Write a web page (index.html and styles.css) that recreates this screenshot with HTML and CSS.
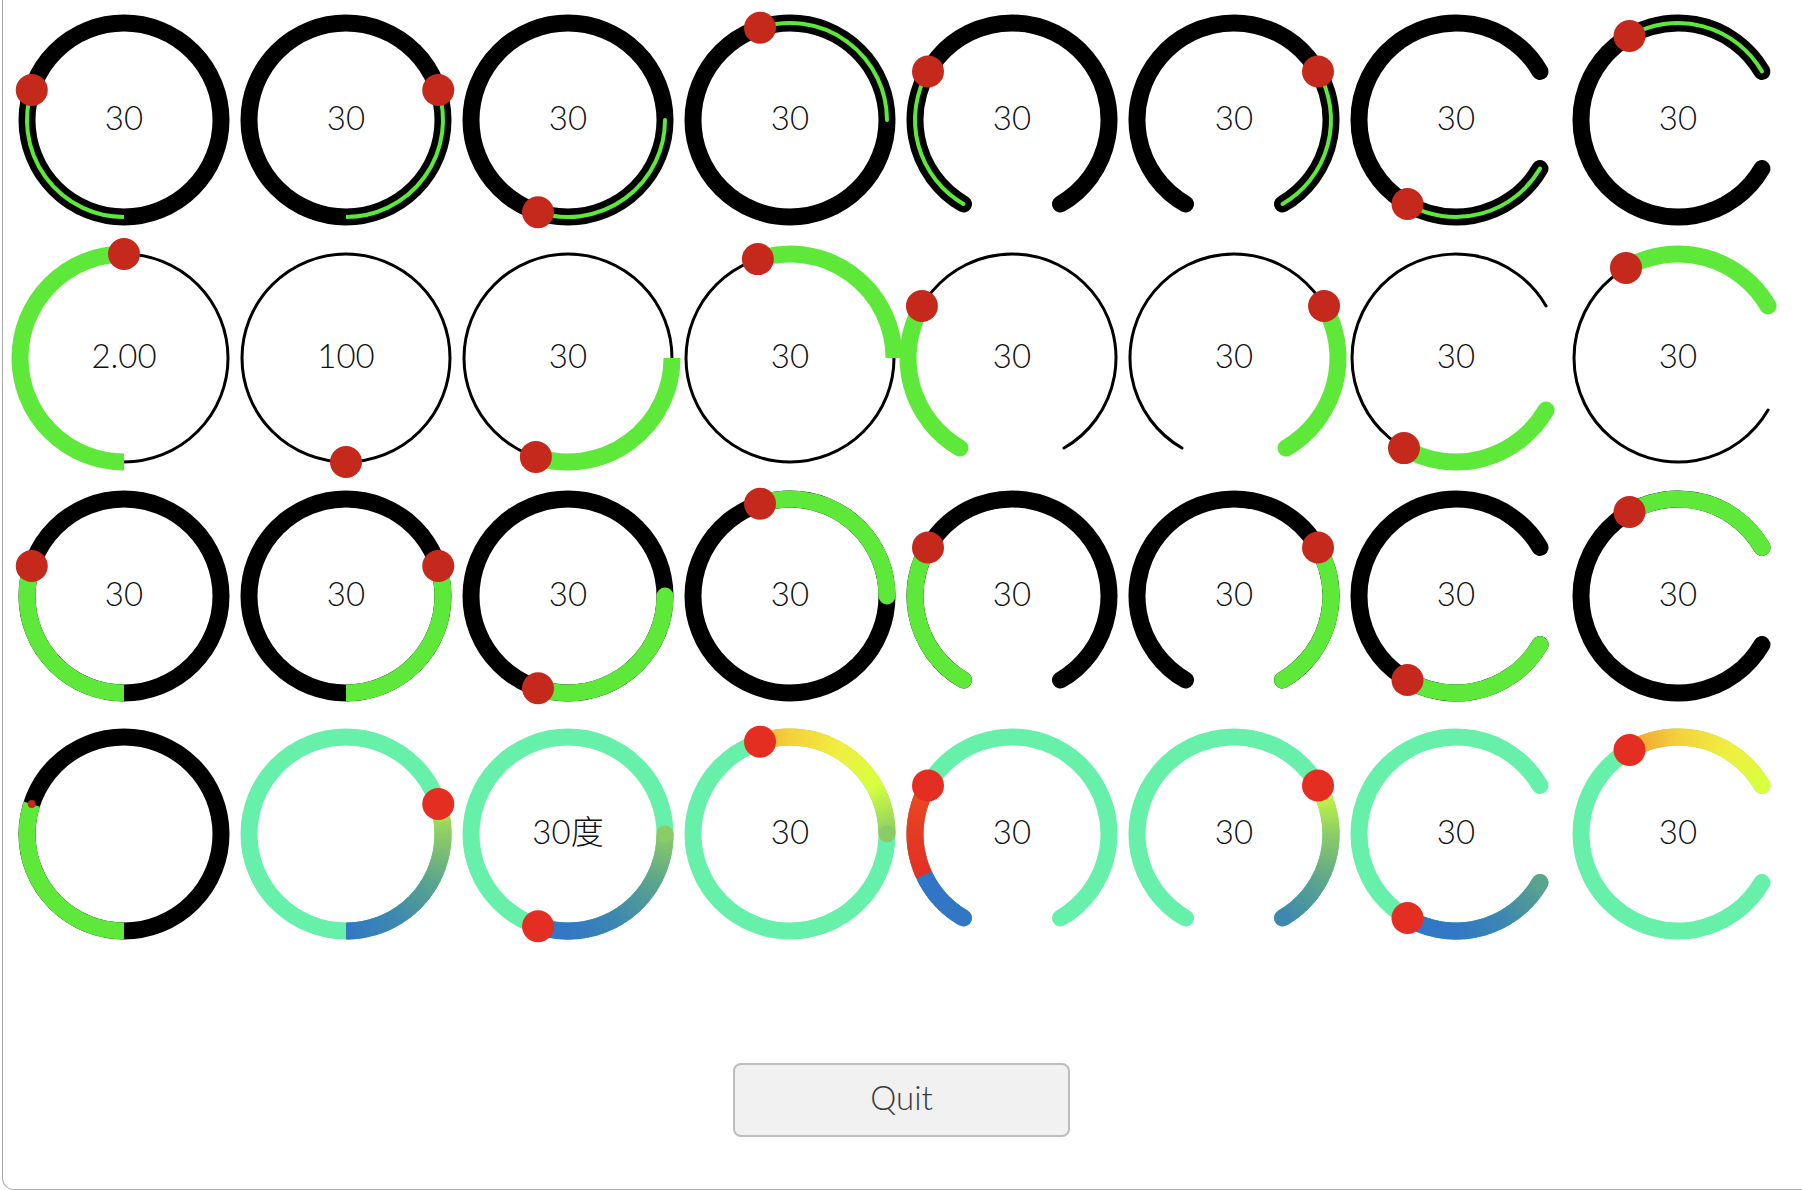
FILE: index.html
```html
<!DOCTYPE html>
<html lang="en">
<head>
<meta charset="utf-8">
<title>Dials</title>
<link rel="stylesheet" href="styles.css">
</head>
<body>
<div class="window">
  <div class="dials" id="dials"></div>
  <div class="actions"><button class="quit" type="button">Quit</button></div>
</div>
<script src="script.js"></script>
</body>
</html>
```

FILE: styles.css
```css
html, body {
  margin: 0;
  padding: 0;
  background: #ffffff;
}
body {
  width: 1802px;
  height: 1190px;
  overflow: hidden;
  font-family: Lato, "Noto Sans CJK SC", sans-serif;
}
.window {
  box-sizing: border-box;
  height: 1190px;
  margin-left: 2px;
  border-left: 1px solid #a9a9a9;
  border-bottom: 1px solid #b5b5b5;
  border-bottom-left-radius: 12px;
}
.dials {
  display: grid;
  grid-template-columns: repeat(8, 222px);
  grid-auto-rows: 238px;
  padding: 1px 0 0 10px;
}
.dial {
  position: relative;
  display: flex;
  align-items: center;
  justify-content: center;
}
.dial svg {
  position: absolute;
  left: 0;
  top: 0;
  overflow: visible;
}
.label {
  position: relative;
  font-family: Lato, "Noto Sans CJK SC", sans-serif;
  font-size: 33px;
  font-weight: 300;
  color: #111111;
  line-height: 1.2;
  padding-bottom: 5px;
}
.actions {
  display: flex;
  justify-content: center;
  margin-top: 110px;
  padding-right: 2px;
}
.quit {
  box-sizing: border-box;
  width: 337px;
  height: 74px;
  background: #f1f1f1;
  border: 2px solid #bdbdbd;
  border-radius: 8px;
  font-family: Lato, sans-serif;
  font-weight: 300;
  font-size: 33px;
  color: #3a3a3a;
  padding: 0 0 7px 0;
}
```

FILE: script.js
```js
(function () {
  var NS = 'http://www.w3.org/2000/svg';
  var W = 222, H = 238, CX = 111, CY = 119;
  var GREEN = '#5de83a', MINT = '#67f0aa', RED1 = '#c5291c', RED2 = '#e52e22';

  var COLS = [
    { track: 'full', start: 180, dir: 1 },
    { track: 'full', start: 180, dir: -1 },
    { track: 'full', start: 90, dir: 1 },
    { track: 'full', start: 90, dir: -1 },
    { track: 'gapB', start: 210, dir: 1 },
    { track: 'gapB', start: 150, dir: -1 },
    { track: 'gapR', start: 120, dir: 1 },
    { track: 'gapR', start: 60, dir: -1 }
  ];
  var TRACKS = { gapB: [210, 510], gapR: [120, 420] };

  var ROWS = [
    { r: 97, tw: 17, tc: '#000', vw: 4, vc: GREEN, hr: 16, hc: RED1 },
    { r: 104, tw: 3, tc: '#000', vw: 17, vc: GREEN, hr: 16, hc: RED1 },
    { r: 97, tw: 17, tc: '#000', vw: 17, vc: GREEN, hr: 16, hc: RED1 },
    { r: 97, tw: 17, tc: MINT, vw: 17, vc: 'conic', hr: 16, hc: RED2 }
  ];

  var OVERRIDES = {
    '1-0': { sweep: 180, label: '2.00' },
    '1-1': { sweep: 0, label: '100' },
    '3-0': { tc: '#000', vc: GREEN, hr: 4, hc: RED1, label: '' },
    '3-1': { label: '' },
    '3-2': { label: '30度' }
  };

  var STOPS = [
    [245, [226, 48, 38]],
    [270, [230, 58, 36]],
    [300, [234, 78, 32]],
    [330, [240, 160, 48]],
    [360, [244, 208, 60]],
    [390, [240, 238, 64]],
    [420, [216, 255, 64]],
    [435, [176, 232, 80]],
    [450, [140, 204, 102]],
    [480, [90, 164, 142]],
    [510, [62, 136, 176]],
    [540, [50, 120, 196]],
    [605, [50, 118, 198]]
  ];

  function colorAt(a) {
    var t = ((a % 360) + 360) % 360;
    if (t < 245) t += 360;
    for (var i = 0; i < STOPS.length - 1; i++) {
      var s0 = STOPS[i], s1 = STOPS[i + 1];
      if (t >= s0[0] && t <= s1[0]) {
        var f = (t - s0[0]) / (s1[0] - s0[0]);
        var c = [0, 1, 2].map(function (k) {
          return Math.round(s0[1][k] + (s1[1][k] - s0[1][k]) * f);
        });
        return 'rgb(' + c.join(',') + ')';
      }
    }
    return 'rgb(50,118,198)';
  }

  function pt(r, a) {
    var t = a * Math.PI / 180;
    return [CX + r * Math.sin(t), CY - r * Math.cos(t)];
  }

  function arcD(r, a0, a1) {
    var s = Math.min(a0, a1), e = Math.max(a0, a1);
    var p0 = pt(r, s), p1 = pt(r, e);
    return 'M' + p0[0].toFixed(2) + ' ' + p0[1].toFixed(2) +
      ' A' + r + ' ' + r + ' 0 ' + (e - s > 180 ? 1 : 0) + ' 1 ' +
      p1[0].toFixed(2) + ' ' + p1[1].toFixed(2);
  }

  function el(name, attrs, parent) {
    var n = document.createElementNS(NS, name);
    for (var k in attrs) n.setAttribute(k, attrs[k]);
    parent.appendChild(n);
    return n;
  }

  var host = document.getElementById('dials');

  for (var row = 0; row < 4; row++) {
    for (var col = 0; col < 8; col++) {
      var base = ROWS[row], c = COLS[col];
      var o = OVERRIDES[row + '-' + col] || {};
      var cfg = {};
      for (var k in base) cfg[k] = base[k];
      for (var k2 in o) cfg[k2] = o[k2];

      var cell = document.createElement('div');
      cell.className = 'dial';
      var svg = el('svg', { width: W, height: H, viewBox: '0 0 ' + W + ' ' + H }, cell);

      if (c.track === 'full') {
        el('circle', { cx: CX, cy: CY, r: cfg.r, fill: 'none', stroke: cfg.tc, 'stroke-width': cfg.tw }, svg);
      } else {
        var tr = TRACKS[c.track];
        el('path', { d: arcD(cfg.r, tr[0], tr[1]), fill: 'none', stroke: cfg.tc, 'stroke-width': cfg.tw, 'stroke-linecap': 'round' }, svg);
      }

      var sweep = (cfg.sweep !== undefined) ? cfg.sweep : (c.track === 'full' ? 108 : 90);
      var a0 = c.start, a1 = c.start + c.dir * sweep;
      var round = col >= 2 && !(row === 1 && col < 4);
      if (sweep > 0) {
        if (cfg.vc === 'conic') {
          var step = 1;
          for (var i = 0; i < sweep; i += step) {
            var sa = a0 + c.dir * i;
            var ea = a0 + c.dir * Math.min(i + step + 0.6, sweep);
            el('path', { d: arcD(cfg.r, sa, ea), fill: 'none', stroke: colorAt(a0 + c.dir * (i + step / 2)), 'stroke-width': cfg.vw }, svg);
          }
          if (round) {
            var sp = pt(cfg.r, a0);
            el('circle', { cx: sp[0], cy: sp[1], r: cfg.vw / 2, fill: colorAt(a0) }, svg);
          }
        } else {
          el('path', { d: arcD(cfg.r, a0, a1), fill: 'none', stroke: cfg.vc, 'stroke-width': cfg.vw, 'stroke-linecap': round ? 'round' : 'butt' }, svg);
        }
      }

      var hp = pt(cfg.r, a1);
      el('circle', { cx: hp[0].toFixed(2), cy: hp[1].toFixed(2), r: cfg.hr, fill: cfg.hc }, svg);

      var label = (cfg.label !== undefined) ? cfg.label : '30';
      if (label !== '') {
        var span = document.createElement('span');
        span.className = 'label';
        span.textContent = label;
        cell.appendChild(span);
      }
      host.appendChild(cell);
    }
  }
})();
```
